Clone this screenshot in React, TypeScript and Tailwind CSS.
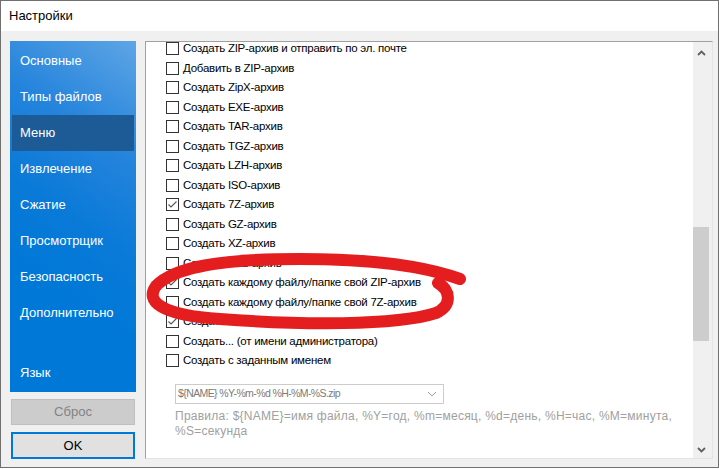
import React from 'react';

const font = { fontFamily: '"Liberation Sans", Arial, sans-serif' };

const navItems = [
  'Основные',
  'Типы файлов',
  'Меню',
  'Извлечение',
  'Сжатие',
  'Просмотрщик',
  'Безопасность',
  'Дополнительно',
];

const rows: { label: string; checked?: boolean }[] = [
  { label: 'Создать ZIP-архив и отправить по эл. почте' },
  { label: 'Добавить в ZIP-архив' },
  { label: 'Создать ZipX-архив' },
  { label: 'Создать EXE-архив' },
  { label: 'Создать TAR-архив' },
  { label: 'Создать TGZ-архив' },
  { label: 'Создать LZH-архив' },
  { label: 'Создать ISO-архив' },
  { label: 'Создать 7Z-архив', checked: true },
  { label: 'Создать GZ-архив' },
  { label: 'Создать XZ-архив' },
  { label: 'Создать BZ2-архив' },
  { label: 'Создать каждому файлу/папке свой ZIP-архив', checked: true },
  { label: 'Создать каждому файлу/папке свой 7Z-архив' },
  { label: 'Создать...', checked: true },
  { label: 'Создать... (от имени администратора)' },
  { label: 'Создать с заданным именем' },
];

function Checkbox({ checked }: { checked?: boolean }) {
  return (
    <span className="w-[13px] h-[13px] border border-[#333] bg-white shrink-0 flex items-center justify-center">
      {checked && (
        <svg width="11" height="11" viewBox="0 0 11 11">
          <polyline points="1.5,5.5 4,8 9.5,2.5" fill="none" stroke="#555" strokeWidth="1.1" />
        </svg>
      )}
    </span>
  );
}

function Chevron({ up }: { up?: boolean }) {
  return (
    <svg width="9" height="6" viewBox="0 0 9 6">
      <polyline
        points={up ? '1,5 4.5,1.5 8,5' : '1,1 4.5,4.5 8,1'}
        fill="none"
        stroke="#606060"
        strokeWidth="1.8"
      />
    </svg>
  );
}

export default function App() {
  return (
    <div className="relative w-[719px] h-[468px] border border-[#707070] bg-[#f0f0f0] flex flex-col text-black" style={font}>
      {/* Title bar */}
      <div className="h-[30px] bg-white flex items-center pl-[8px] text-[13px] shrink-0">Настройки</div>

      <div className="flex flex-1 pt-[10px] pl-[9px]">
        {/* Sidebar */}
        <div className="w-[126px] flex flex-col">
          <div className="h-[351px] flex flex-col pt-[2px] pb-px text-white text-[13px] bg-[linear-gradient(215deg,#5ea5e5_0%,#2584dc_28%,#0a7ad8_50%,#0078d7_70%)]">
            {navItems.map((item) => (
              <div
                key={item}
                className={
                  item === 'Меню'
                    ? 'h-[36px] mx-[2px] pl-[8px] flex items-center bg-[#1d5b96]'
                    : 'h-[36px] mx-[2px] pl-[8px] flex items-center'
                }
              >
                {item}
              </div>
            ))}
            <div className="flex-1" />
            <div className="h-[36px] mx-[2px] pl-[8px] flex items-center">Язык</div>
          </div>
          <div className="mt-[7px] mx-px h-[26px] bg-[#cccccc] border border-[#bfbfbf] text-[#838383] text-[13px] flex items-center justify-center">
            Сброс
          </div>
          <div className="mt-[7px] mx-px h-[27px] bg-[#e1e1e1] border-2 border-[#0078d7] text-[13px] flex items-center justify-center">
            OK
          </div>
        </div>

        {/* Content panel */}
        <div className="ml-[9px] w-[568px] h-[418px] border-t border-l border-[#a0a0a0] border-r border-b border-r-[#e3e3e3] border-b-[#e3e3e3] pr-[3px] flex">
          <div className="flex-1 bg-white overflow-hidden">
            <div className="-mt-[3px] flex flex-col">
              {rows.map((r) => (
                <div key={r.label} className="h-[19.5px] pl-[20px] flex items-center gap-[4px] text-[11.5px] tracking-[-0.25px] whitespace-nowrap">
                  <Checkbox checked={r.checked} />
                  <span>{r.label}</span>
                </div>
              ))}
              <div className="mt-[13px] ml-[29px] w-[269px] h-[20px] border border-[#cccccc] bg-white flex items-center justify-between pl-[2px] pr-[6px] text-[10.5px] tracking-[-0.6px] text-[#7a7a7a]">
                <span>{'${NAME} %Y-%m-%d %H-%M-%S.zip'}</span>
                <svg width="10" height="6" viewBox="0 0 10 6">
                  <polyline points="1,1 5,5 9,1" fill="none" stroke="#a0a0a0" strokeWidth="1" />
                </svg>
              </div>
              <div className="mt-[5px] ml-[29px] text-[12px] leading-[15px] tracking-[0.25px] text-[#a0a0a0] whitespace-nowrap">
                <div>Правила: {'${NAME}'}=имя файла, %Y=год, %m=месяц, %d=день, %H=час, %M=минута,</div>
                <div>%S=секунда</div>
              </div>
            </div>
          </div>
          {/* Scrollbar */}
          <div className="w-[16px] flex flex-col bg-[#f0f0f0]">
            <div className="h-[19px] flex items-center justify-center pl-px pt-[2px]">
              <Chevron up />
            </div>
            <div className="mt-[166px] h-[114px] bg-[#cdcdcd]" />
            <div className="flex-1" />
            <div className="h-[17px] flex items-center justify-center pl-px">
              <Chevron />
            </div>
          </div>
        </div>
      </div>

      {/* Red hand-drawn annotation */}
      <svg className="absolute left-[-1px] top-[-1px] pointer-events-none" width="719" height="469" viewBox="0 0 719 469">
        <path
          d="M460 279 C430 268 380 259 300 259 C220 259 174 267 156 286 C145 301 160 315 220 319 C300 325 395 326 436 313 C453 305 450 290 438 283"
          fill="none"
          stroke="#e41e1e"
          strokeWidth="12"
          strokeLinecap="round"
          strokeLinejoin="round"
        />
      </svg>
    </div>
  );
}
